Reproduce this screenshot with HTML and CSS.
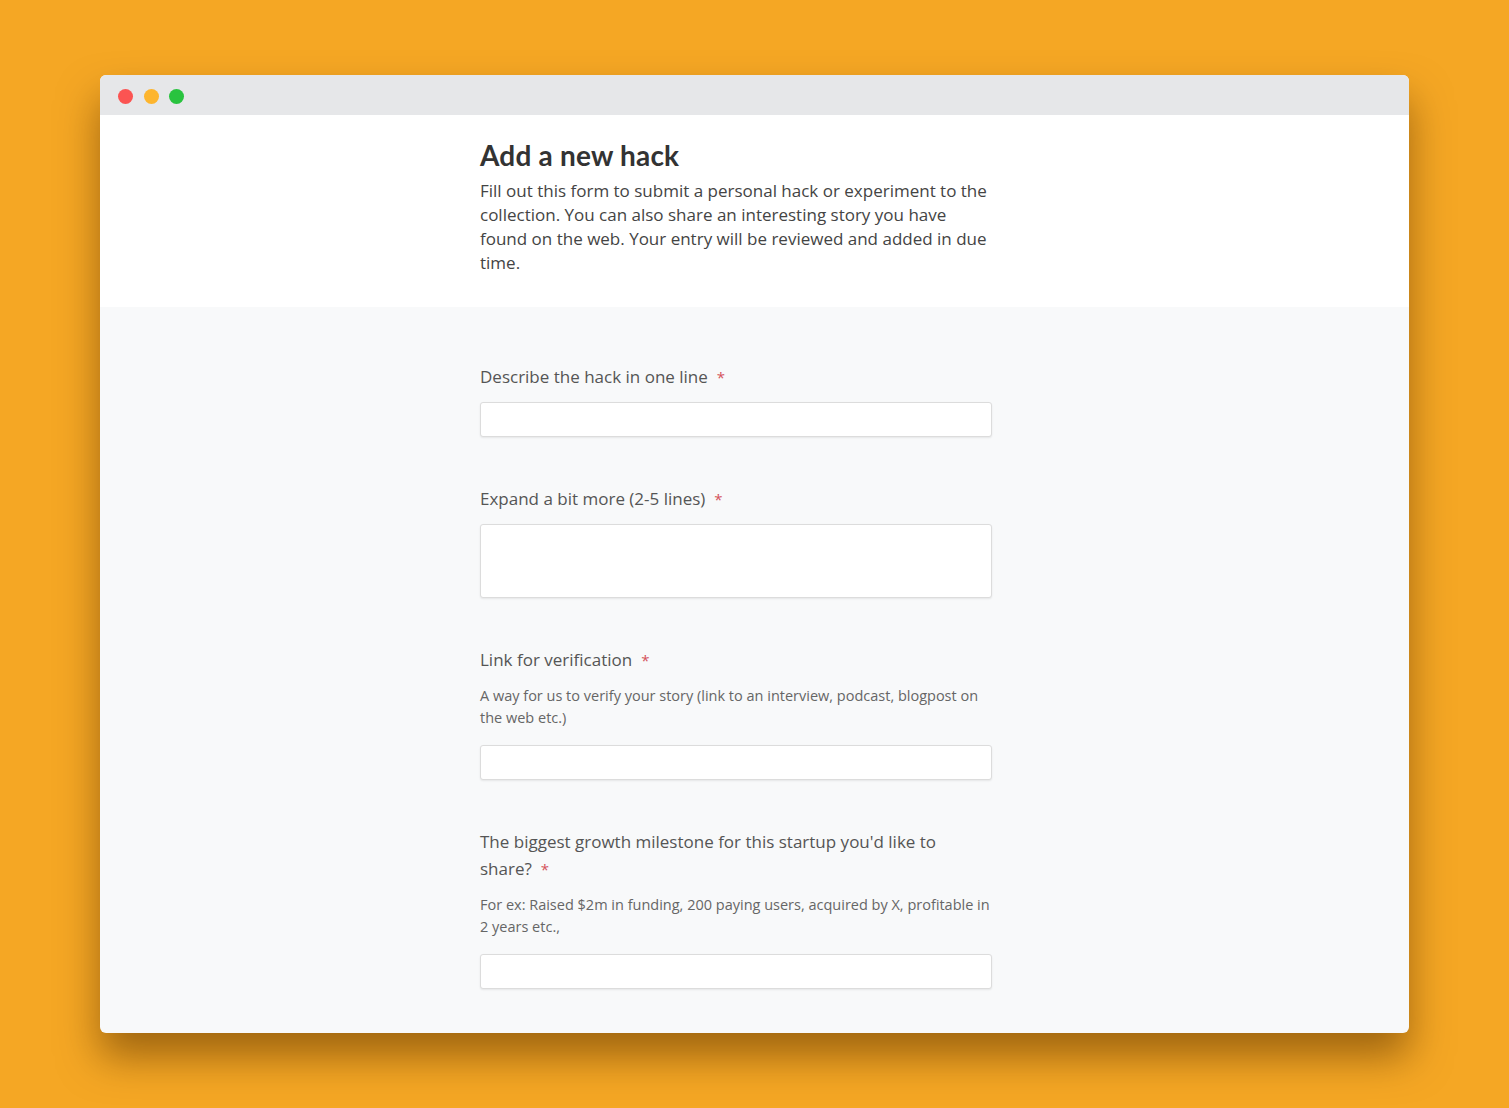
FILE: index.html
```html
<!DOCTYPE html>
<html lang="en">
<head>
    <meta charset="UTF-8">
    <title>Add a new hack</title>
    <link rel="stylesheet" href="styles.css">
</head>
<body>
    <div class="window">
        <div class="title-bar">
            <span class="dot dot-red"></span>
            <span class="dot dot-yellow"></span>
            <span class="dot dot-green"></span>
        </div>
        <div class="form-header">
            <div class="column">
                <h1>Add a new hack</h1>
                <p>Fill out this form to submit a personal hack or experiment to the collection. You can also share an interesting story you have found on the web. Your entry will be reviewed and added in due time.</p>
            </div>
        </div>
        <form class="form-body">
            <div class="column">
                <div class="field">
                    <label for="oneline">Describe the hack in one line<span class="req">*</span></label>
                    <input type="text" id="oneline" name="oneline">
                </div>
                <div class="field">
                    <label for="more">Expand a bit more (2-5 lines)<span class="req">*</span></label>
                    <textarea id="more" name="more"></textarea>
                </div>
                <div class="field">
                    <label for="link">Link for verification<span class="req">*</span></label>
                    <p class="help">A way for us to verify your story (link to an interview, podcast, blogpost on the web etc.)</p>
                    <input type="text" id="link" name="link">
                </div>
                <div class="field">
                    <label for="milestone">The biggest growth milestone for this startup you'd like to share?<span class="req">*</span></label>
                    <p class="help">For ex: Raised $2m in funding, 200 paying users, acquired by X, profitable in 2 years etc.,</p>
                    <input type="text" id="milestone" name="milestone">
                </div>
            </div>
        </form>
    </div>
</body>
</html>
```

FILE: styles.css
```css
body {
    margin: 0;
    padding: 75px 100px;
    background-color: #f5a724;
    font-family: 'Open Sans', 'Noto Sans', sans-serif;
    color: #444;
}

.window {
    height: 958px;
    border-radius: 6px;
    overflow: hidden;
    background-color: #f8f9fa;
    box-shadow: 0 24px 40px rgba(90, 50, 0, 0.55);
}

/* Title bar with the three traffic lights */
.title-bar {
    height: 40px;
    background-color: #e6e7e9;
    display: flex;
    align-items: center;
    padding: 2px 0 0 18px;
    box-sizing: border-box;
    gap: 10.5px;
}

.dot {
    width: 15px;
    height: 15px;
    border-radius: 50%;
}

.dot-red { background-color: #fb5452; }
.dot-yellow { background-color: #fdb52e; }
.dot-green { background-color: #29c33f; }

.column {
    width: 512px;
    margin-left: 380px;
}

.form-header {
    background-color: #fff;
    padding: 24px 0 32px;
}

h1 {
    margin: 0 0 8px;
    font-family: 'Lato', sans-serif;
    font-size: 28px;
    line-height: 32px;
    font-weight: 700;
    letter-spacing: 0.2px;
    color: #333;
}

.form-header p {
    margin: 0;
    font-size: 17px;
    line-height: 24px;
    color: #444;
}

.form-body {
    padding: 56px 0 0;
}

.field {
    margin-bottom: 48px;
}

label {
    display: block;
    margin-bottom: 12px;
    font-size: 17px;
    line-height: 27px;
    color: #555;
}

.req {
    display: inline-block;
    margin-left: 9px;
    color: #d4525a;
    font-size: 15px;
    line-height: 20px;
}

.help {
    margin: 0 0 16px;
    font-size: 14.5px;
    line-height: 22px;
    color: #666;
}

input[type="text"],
textarea {
    display: block;
    box-sizing: border-box;
    width: 100%;
    height: 35px;
    margin: 0;
    border: 1px solid #dcdcdc;
    border-radius: 3px;
    background-color: #fff;
    box-shadow: 0 1px 2px rgba(0, 0, 0, 0.08);
    font-family: inherit;
    resize: none;
}

textarea {
    height: 74px;
}
```
